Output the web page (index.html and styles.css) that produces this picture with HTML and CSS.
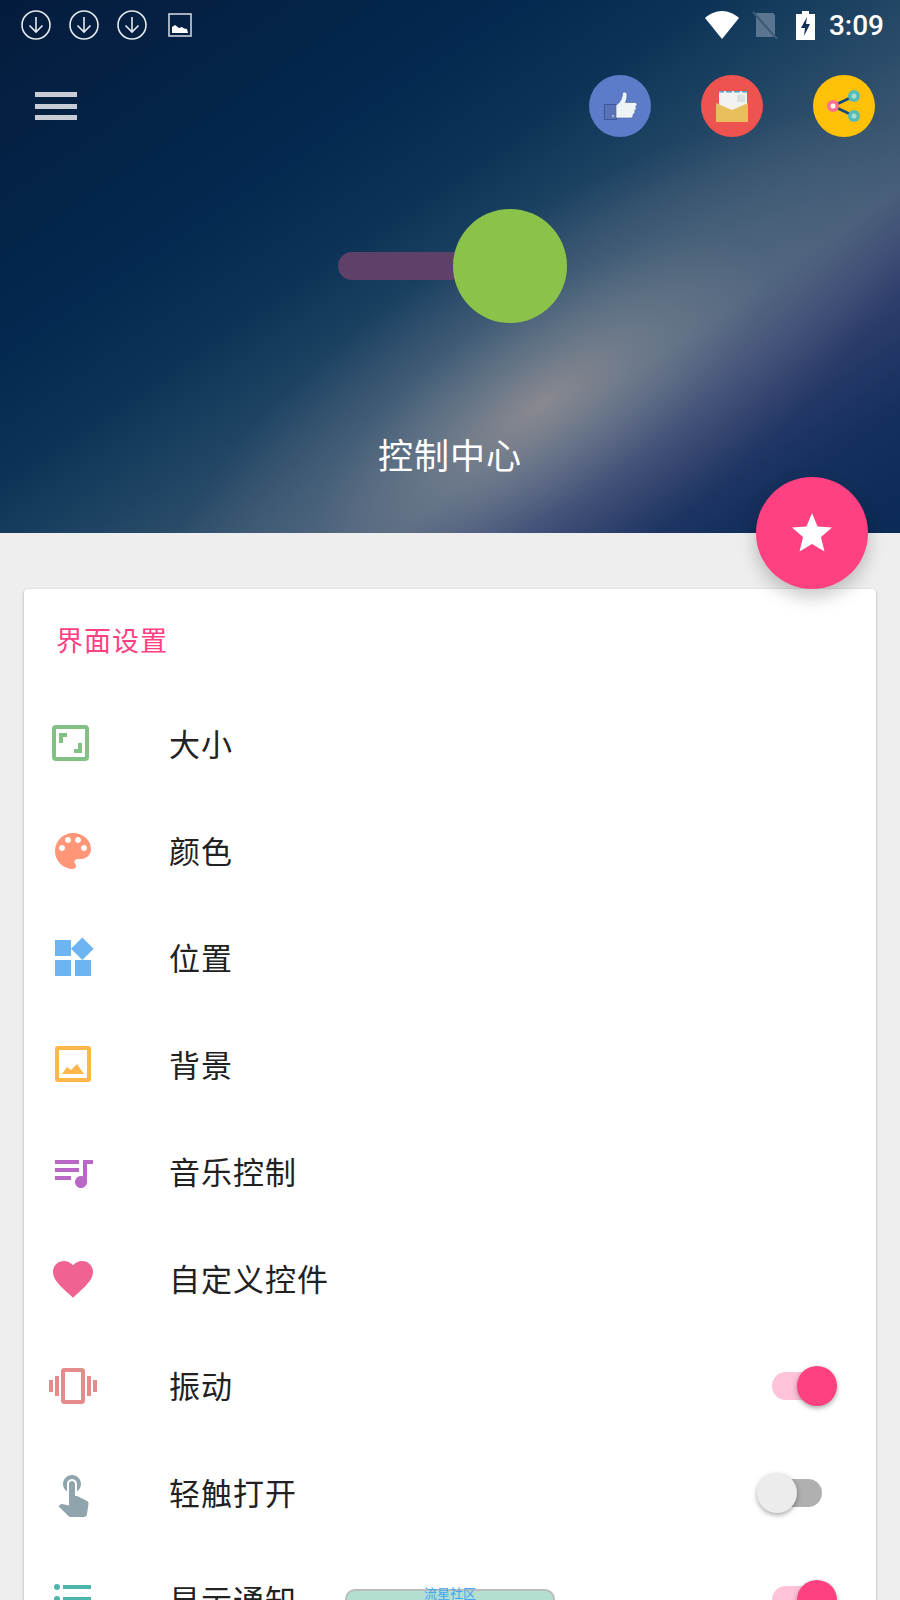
FILE: index.html
```html
<!DOCTYPE html>
<html lang="en">

<head>
    <meta charset="UTF-8">
    <meta name="viewport" content="width=device-width, initial-scale=1.0">
    <title>控制中心</title>
    <link rel="stylesheet" href="styles.css">
</head>

<body>

    <!-- Header -->
    <header class="hero">
        <div class="hero-bg"><div class="hero-glow"></div></div>

        <!-- Status Bar -->
        <div class="status-bar">
            <div class="status-left">
                <svg class="status-dl" viewBox="0 0 30 30"><circle cx="15" cy="15" r="14" fill="none" stroke="#e6e9ed" stroke-width="1.6"/><path d="M15 7v15M8.500 15.500L15 22l6.500-6.500" fill="none" stroke="#e6e9ed" stroke-width="1.600"/></svg>
                <svg class="status-dl" viewBox="0 0 30 30"><circle cx="15" cy="15" r="14" fill="none" stroke="#e6e9ed" stroke-width="1.6"/><path d="M15 7v15M8.500 15.500L15 22l6.500-6.500" fill="none" stroke="#e6e9ed" stroke-width="1.600"/></svg>
                <svg class="status-dl" viewBox="0 0 30 30"><circle cx="15" cy="15" r="14" fill="none" stroke="#e6e9ed" stroke-width="1.6"/><path d="M15 7v15M8.500 15.500L15 22l6.500-6.500" fill="none" stroke="#e6e9ed" stroke-width="1.600"/></svg>
                <svg class="status-pic" viewBox="0 0 24 24"><rect x="1" y="1" width="22" height="22" fill="none" stroke="#ccd2da" stroke-width="1.600"/><path d="M4 20v-6l3-2 4 3 3-1 2 1.500 3 .5 1 4z" fill="#fff"/></svg>
            </div>
            <div class="status-right">
                <svg class="ic-wifi" viewBox="0 0 34 28"><path d="M17 28L0 7C4.500 3 10.500 0 17 0s12.500 3 17 7z" fill="#fff"/></svg>
                <svg class="ic-sim" viewBox="0 0 26 28"><path d="M4 2h17l2 2v22H4z" fill="#5a7590"/><path d="M1 1l24 27" stroke="#3c5a78" stroke-width="2"/></svg>
                <svg class="ic-batt" viewBox="0 0 19 29"><path d="M6 0h7v3h6v26H0V3h6z" fill="#fff"/><path d="M11 6l-6 11h4l-1 8 6-12h-4z" fill="#10305a"/></svg>
                <span class="status-time">3:09</span>
            </div>
        </div>

        <!-- Toolbar -->
        <div class="toolbar">
            <div class="menu-btn"><span></span><span></span><span></span></div>
            <div class="toolbar-actions">
                <div class="round-btn btn-like">
                    <svg viewBox="0 0 62 62"><rect x="15.500" y="29.500" width="12" height="15" fill="#5a73b8" stroke="#3f5596"/><circle cx="24" cy="41" r="1" fill="#c9d3e8"/><path d="M27 30c4-2 6-6 6.500-11 .5-3 4.500-2.500 4.500 1 0 3-1 6-1.500 7.500H46c2.500 0 2.500 3.500.5 4 1.500 1.500.5 4-1 4 1 1.500 0 3.500-1.500 4 .5 2-.5 3.500-2.500 3.500H27z" fill="#eef3f6" stroke="#47609f" stroke-width=".6"/></svg>
                </div>
                <div class="round-btn btn-mail">
                    <svg viewBox="0 0 62 62"><rect x="18" y="16" width="28" height="22" fill="#f2f2f2"/><path d="M18 16h5v1.500h-5zM25 16h6v1.500h-6zM33 16h6v1.500h-6zM41 16h5v1.500h-5z" fill="#4fa3d1"/><rect x="36" y="20" width="8" height="7" fill="#dcdfe2"/><path d="M15 28l16 7 16-7v19H15z" fill="#e8bf5c"/></svg>
                </div>
                <div class="round-btn btn-share">
                    <svg viewBox="0 0 62 62"><path d="M20 31l21-10M20 31l21 10" stroke="#134a7c" stroke-width="2.500"/><circle cx="20" cy="31" r="6" fill="#f8718f"/><circle cx="20" cy="31" r="2.500" fill="#fff"/><circle cx="41" cy="21" r="6" fill="#56bdb4"/><circle cx="41" cy="21" r="2.500" fill="#a8dcd6"/><circle cx="41" cy="41" r="6" fill="#56bdb4"/><circle cx="41" cy="41" r="2.500" fill="#a8dcd6"/></svg>
                </div>
            </div>
        </div>

        <!-- Big Switch -->
        <div class="big-switch">
            <div class="big-track"></div>
            <div class="big-thumb"></div>
        </div>

        <h1 class="hero-title">控制中心</h1>

        <div class="fab">
            <svg viewBox="0 0 40 40"><path d="M20 1l5.500 13.500L40 15.500 29 25l3.500 14.500L20 32 7.500 39.500 11 25 0 15.500l14.500-1z" fill="#fff"/></svg>
        </div>
    </header>

    <!-- Settings Card -->
    <main class="card">
        <h2 class="card-title">界面设置</h2>

        <div class="row">
            <svg class="row-icon" viewBox="0 0 48 48"><rect x="5" y="7" width="33" height="32" rx="2" fill="none" stroke="#81c184" stroke-width="4"/><path d="M10 13h8v4h-4v6h-4zM33 33h-8v-4h4v-6h4z" fill="#81c184"/></svg>
            <span class="row-label">大小</span>
        </div>
        <div class="row">
            <svg class="row-icon" viewBox="0 0 24 24"><path fill="#ff9678" d="M12 3c-4.970 0-9 4.030-9 9s4.030 9 9 9c.83 0 1.500-.67 1.500-1.500 0-.39-.15-.74-.39-1.010-.23-.26-.38-.61-.38-.99 0-.83.67-1.500 1.500-1.500H16c2.760 0 5-2.240 5-5 0-4.420-4.030-8-9-8zm-5.500 9c-.83 0-1.500-.67-1.500-1.500S5.670 9 6.500 9 8 9.670 8 10.500 7.330 12 6.500 12zm3-4C8.670 8 8 7.330 8 6.500S8.670 5 9.500 5s1.500.67 1.500 1.500S10.330 8 9.500 8zm5 0c-.83 0-1.500-.67-1.500-1.500S13.670 5 14.500 5s1.500.67 1.500 1.500S15.330 8 14.500 8zm3 4c-.83 0-1.500-.67-1.500-1.500S16.670 9 17.500 9s1.500.67 1.500 1.500-.67 1.500-1.500 1.500z"/></svg>
            <span class="row-label">颜色</span>
        </div>
        <div class="row">
            <svg class="row-icon" viewBox="0 0 24 24"><path fill="#6db5f2" d="M13 13v8h8v-8h-8zM3 21h8v-8H3v8zM3 3v8h8V3H3zm13.660-1.310L11 7.340 16.660 13l5.660-5.660-5.660-5.650z"/></svg>
            <span class="row-label">位置</span>
        </div>
        <div class="row">
            <svg class="row-icon" viewBox="0 0 48 48"><rect x="8" y="7" width="32" height="32" rx="1" fill="none" stroke="#ffb74d" stroke-width="4"/><path d="M13 33l5-7 4 3 6-6 7 10z" fill="#ffb74d"/></svg>
            <span class="row-label">背景</span>
        </div>
        <div class="row">
            <svg class="row-icon" viewBox="0 0 24 24"><path fill="#ba68c8" d="M15 6H3v2h12V6zm0 4H3v2h12v-2zM3 16h8v-2H3v2zM17 6v8.180c-.31-.11-.65-.18-1-.18-1.660 0-3 1.340-3 3s1.340 3 3 3 3-1.340 3-3V8h3V6h-5z"/></svg>
            <span class="row-label">音乐控制</span>
        </div>
        <div class="row">
            <svg class="row-icon" viewBox="0 0 24 24"><path fill="#f06292" d="M12 21.350l-1.450-1.320C5.400 15.360 2 12.280 2 8.500 2 5.420 4.420 3 7.500 3c1.740 0 3.410.81 4.500 2.090C13.090 3.810 14.760 3 16.500 3 19.580 3 22 5.420 22 8.500c0 3.780-3.400 6.860-8.550 11.540L12 21.350z"/></svg>
            <span class="row-label">自定义控件</span>
        </div>
        <div class="row">
            <svg class="row-icon" viewBox="0 0 24 24"><path fill="#e58b8b" d="M0 15h2V9H0v6zm3 2h2V7H3v10zm19-8v6h2V9h-2zm-3 8h2V7h-2v10zM16.500 3h-9C6.670 3 6 3.670 6 4.500v15c0 .83.67 1.500 1.500 1.500h9c.83 0 1.500-.67 1.500-1.500v-15c0-.83-.67-1.500-1.500-1.500zM16 19H8V5h8v14z"/></svg>
            <span class="row-label">振动</span>
            <div class="switch on"><span class="track"></span><span class="thumb"></span></div>
        </div>
        <div class="row">
            <svg class="row-icon" viewBox="0 0 24 24"><path fill="#90a4ae" d="M9 11.240V7.500C9 6.120 10.120 5 11.500 5S14 6.120 14 7.500v3.740c1.210-.81 2-2.180 2-3.740C16 5.010 13.990 3 11.500 3S7 5.010 7 7.500c0 1.560.79 2.930 2 3.740zm9.840 4.630l-4.540-2.260c-.17-.07-.35-.11-.54-.11H13v-6c0-.83-.67-1.500-1.500-1.500S10 6.670 10 7.500v10.740l-3.430-.72c-.08-.01-.15-.03-.24-.03-.31 0-.59.13-.79.33l-.79.8 4.940 4.940c.27.27.65.44 1.060.44h6.790c.75 0 1.330-.55 1.440-1.280l.75-5.270c.01-.07.02-.14.02-.2 0-.62-.38-1.160-.91-1.380z"/></svg>
            <span class="row-label">轻触打开</span>
            <div class="switch"><span class="track"></span><span class="thumb"></span></div>
        </div>
        <div class="row">
            <svg class="row-icon" viewBox="0 0 48 48"><circle cx="8" cy="11" r="3" fill="#4db6ac"/><rect x="14" y="9" width="28" height="4" fill="#4db6ac"/><circle cx="8" cy="23" r="3" fill="#4db6ac"/><rect x="14" y="21" width="28" height="4" fill="#4db6ac"/><circle cx="8" cy="35" r="3" fill="#4db6ac"/><rect x="14" y="33" width="28" height="4" fill="#4db6ac"/></svg>
            <span class="row-label">显示通知</span>
            <div class="promo"><span>流星社区</span></div>
            <div class="switch on"><span class="track"></span><span class="thumb"></span></div>
        </div>
    </main>

</body>

</html>
```

FILE: styles.css
```css
/* General Styling */
html, body {
    margin: 0;
    padding: 0;
    height: 1600px;
    overflow: hidden;
}

body {
    font-family: 'Roboto', 'Noto Sans CJK SC', sans-serif;
    background-color: #eeeeee;
    color: #212121;
}

/* Header */
.hero {
    position: relative;
    height: 533px;
}

.hero-bg {
    position: absolute;
    top: 0;
    left: 0;
    right: 0;
    bottom: 0;
    overflow: hidden;
    background: linear-gradient(146deg, #041c3c 0%, #04284f 30%, #0c3357 42%, #1f4463 52%, #33526d 61%, #465c78 70%, #3c4b74 75%, #2c3c6b 80%, #15305d 89%, #0b2a55 100%);
}

.hero-glow {
    position: absolute;
    left: 80px;
    top: 235px;
    width: 920px;
    height: 340px;
    border-radius: 50%;
    background: radial-gradient(closest-side, rgba(145, 142, 146, 0.9) 0%, rgba(130, 138, 150, 0.6) 28%, rgba(110, 125, 145, 0.3) 58%, rgba(90, 110, 135, 0) 100%);
    transform: rotate(-34deg);
}

/* Status Bar */
.status-bar {
    position: relative;
    height: 50px;
    display: flex;
    justify-content: space-between;
    align-items: center;
    padding: 0 16px 0 21px;
}

.status-left,
.status-right {
    display: flex;
    align-items: center;
}

.status-dl {
    width: 30px;
    height: 30px;
    margin-right: 18px;
}

.status-pic {
    width: 24px;
    height: 24px;
    margin-left: 3px;
}

.ic-wifi {
    width: 34px;
    height: 28px;
    margin-right: 13px;
}

.ic-sim {
    width: 26px;
    height: 28px;
    margin-right: 18px;
}

.ic-batt {
    width: 19px;
    height: 29px;
    margin-right: 14px;
}

.status-time {
    color: #ffffff;
    font-size: 28px;
    font-weight: 500;
}

/* Toolbar */
.toolbar {
    position: relative;
    display: flex;
    justify-content: space-between;
    align-items: center;
    padding: 25px 25px 0 35px;
}

.menu-btn {
    display: flex;
    flex-direction: column;
    gap: 6.500px;
}

.menu-btn span {
    display: block;
    width: 42px;
    height: 5px;
    background-color: #c8cdd5;
}

.toolbar-actions {
    display: flex;
    gap: 50px;
}

.round-btn {
    width: 62px;
    height: 62px;
    border-radius: 50%;
}

.round-btn svg {
    display: block;
}

.btn-like {
    background-color: #5c7cc9;
}

.btn-mail {
    background-color: #ef5350;
}

.btn-share {
    background-color: #ffc107;
}

/* Big Switch */
.big-switch {
    position: relative;
    width: 224px;
    height: 114px;
    margin: 72px auto 0;
    display: flex;
    align-items: center;
}

.big-track {
    width: 100%;
    height: 28px;
    border-radius: 14px;
    background-color: #5f4069;
}

.big-thumb {
    position: absolute;
    left: 115px;
    top: 0;
    width: 114px;
    height: 114px;
    border-radius: 50%;
    background-color: #8bc34a;
}

.hero-title {
    position: relative;
    margin: 108px 0 0;
    text-align: center;
    color: #ffffff;
    font-size: 35px;
    letter-spacing: 1px;
    line-height: 54px;
    font-weight: 400;
}

.fab {
    position: absolute;
    right: 32px;
    bottom: -56px;
    width: 112px;
    height: 112px;
    border-radius: 50%;
    background-color: #ff4081;
    box-shadow: 0 8px 18px rgba(0, 0, 0, 0.22);
    display: flex;
    align-items: center;
    justify-content: center;
}

.fab svg {
    width: 40px;
    height: 40px;
    margin-top: -3px;
}

/* Settings Card */
.card {
    margin: 56px 24px 0;
    padding: 31px 0 0;
    background-color: #ffffff;
    border-radius: 4px;
    box-shadow: 0 1px 3px rgba(0, 0, 0, 0.3);
}

.card-title {
    margin: 0 0 26px;
    padding-left: 32px;
    color: #ff4081;
    font-size: 27px;
    letter-spacing: 1px;
    line-height: 44px;
    font-weight: 400;
}

.row {
    display: flex;
    align-items: center;
    height: 107px;
    padding-left: 25px;
    position: relative;
}

.row-icon {
    width: 48px;
    height: 48px;
    flex-shrink: 0;
    margin-right: 72px;
}

.row-label {
    font-size: 31px;
    letter-spacing: 1px;
    margin-bottom: 2px;
    color: #212121;
}

/* Switches */
.switch {
    position: relative;
    width: 50px;
    height: 28px;
    margin-left: auto;
    margin-right: 54px;
}

.track {
    display: block;
    height: 100%;
    border-radius: 14px;
    background-color: #b0b0b0;
}

.thumb {
    position: absolute;
    top: -6px;
    left: -15px;
    width: 40px;
    height: 40px;
    border-radius: 50%;
    background-color: #ececec;
    box-shadow: 0 2px 5px rgba(0, 0, 0, 0.35);
}

.switch.on .track {
    background-color: #ffc2d8;
}

.switch.on .thumb {
    left: 25px;
    background-color: #ff4081;
}

/* Promo Banner */
.promo {
    position: absolute;
    left: 321px;
    top: 43px;
    width: 206px;
    height: 40px;
    border: 2px solid #bcbcbc;
    border-radius: 10px;
    background-color: #b2dfcf;
    text-align: center;
}

.promo span {
    display: block;
    margin-top: -5px;
    color: #42a5f5;
    font-size: 13px;
    line-height: 16px;
}
```
